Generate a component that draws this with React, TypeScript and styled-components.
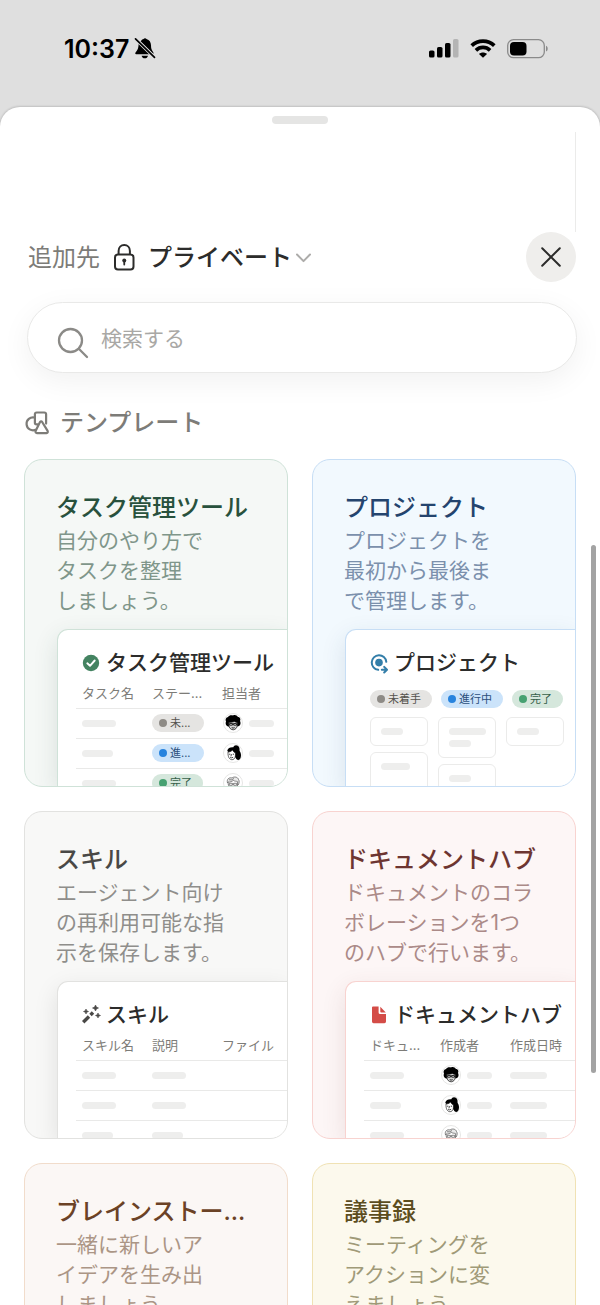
import React from "react";
import styled, { createGlobalStyle } from "styled-components";

const Global = createGlobalStyle`
  *, *::before, *::after { box-sizing: border-box; }
  html, body, #root { height: 100%; }
  body {
    margin: 0;
    overflow: hidden;
    background: #dfdfdf;
    color: #2c2c2b;
    font-family: Inter, "Noto Sans CJK JP", sans-serif;
  }
  button, input { font: inherit; color: inherit; border: 0; background: none; padding: 0; margin: 0; }
  h1, h2, h3, p { margin: 0; font: inherit; }
`;

const Screen = styled.div`
  height: 100vh;
  display: flex;
  flex-direction: column;
`;

const StatusBar = styled.header`
  flex: none;
  height: 107px;
  padding: 0 52px 10px 64px;
  display: flex;
  align-items: center;
  justify-content: space-between;
  color: #000;
`;

const StatusGroup = styled.div<{ $gap: number }>`
  display: flex;
  align-items: center;
  gap: ${(p) => p.$gap}px;
`;

const Clock = styled.time`
  font-size: 25px;
  line-height: 30px;
  font-weight: 600;
`;

const Sheet = styled.main`
  position: relative;
  flex: 1;
  min-height: 0;
  display: flex;
  flex-direction: column;
  background: #fff;
  border-radius: 20px 20px 0 0;
  box-shadow: 0 0 2px 1px rgba(0, 0, 0, 0.14);
  overflow: hidden;
`;

const Grabber = styled.div`
  flex: none;
  width: 56px;
  height: 8px;
  margin: 9px auto 8px;
  border-radius: 4px;
  background: #e5e5e4;
`;

const Pane = styled.div`
  flex: none;
  height: 100px;
  margin-right: 24px;
  border-right: 1px solid #ebebea;
`;

const Header = styled.div`
  flex: none;
  display: flex;
  align-items: center;
  justify-content: space-between;
  height: 50px;
  padding: 0 24px 0 28px;
  font-size: 24px;
  line-height: 36px;
`;

const Destination = styled.div`
  display: flex;
  align-items: center;
  padding-top: 2px;
  color: #7d7c78;
`;

const Picker = styled.button`
  display: flex;
  align-items: center;
  margin-left: 13px;
  color: #2c2c2b;
  font-weight: 500;

  span { margin: 0 3px 0 12px; }
`;

const CloseButton = styled.button`
  display: grid;
  place-items: center;
  width: 50px;
  height: 50px;
  border-radius: 50%;
  background: #efeeec;
`;

const SearchBox = styled.label`
  flex: none;
  display: flex;
  align-items: center;
  gap: 12px;
  height: 71px;
  margin: 20px 23px 0 27px;
  padding: 2px 28px 0 29px;
  border: 1px solid #e9e9e8;
  border-radius: 36px;
  background: #fff;
  box-shadow: 0 8px 30px rgba(0, 0, 0, 0.06);

  svg { margin-top: 8px; }
`;

const SearchInput = styled.input`
  flex: 1;
  min-width: 0;
  height: 32px;
  outline: none;
  font-size: 21px;
  &::placeholder { color: #a9a8a5; opacity: 1; }
`;

const SectionTitle = styled.h2`
  flex: none;
  display: flex;
  align-items: center;
  gap: 10px;
  margin: 32px 24px 0;
  font-size: 24px;
  line-height: 36px;
  font-weight: 500;
  color: #7d7c78;
`;

const Grid = styled.div`
  flex: none;
  display: grid;
  grid-template-columns: repeat(2, minmax(0, 1fr));
  grid-auto-rows: 328px;
  gap: 24px;
  padding: 18px 24px 24px;
`;

const ScrollThumb = styled.div`
  position: absolute;
  top: 438px;
  right: 4px;
  width: 5px;
  height: 528px;
  border-radius: 3px;
  background: #a3a3a3;
`;

type Tone = { bg: string; border: string; title: string; text: string; shade: string };

const CardBox = styled.button<{ $tone: Tone }>`
  display: flex;
  flex-direction: column;
  justify-content: flex-start;
  align-items: stretch;
  min-width: 0;
  padding: 32px 0 0 31px;
  overflow: hidden;
  text-align: left;
  border: 1px solid ${(p) => p.$tone.border};
  border-radius: 18px;
  background: ${(p) => p.$tone.bg};
`;

const CardTitle = styled.h3<{ $tone: Tone }>`
  margin-right: 31px;
  white-space: nowrap;
  font-size: 24px;
  line-height: 32px;
  font-weight: 500;
  color: ${(p) => p.$tone.title};
`;

const CardText = styled.p<{ $tone: Tone }>`
  margin-top: 2px;
  font-size: 21px;
  line-height: 30px;
  white-space: pre;
  color: ${(p) => p.$tone.text};
`;

const Preview = styled.div<{ $tone: Tone }>`
  flex: 1;
  min-height: 0;
  margin: 13px 0 0 1px;
  padding: 17px 0 0 18px;
  overflow: hidden;
  background: #fff;
  border: solid ${(p) => p.$tone.border};
  border-width: 1px 0 0 1px;
  border-top-left-radius: 11px;
  box-shadow: 0 8px 24px ${(p) => p.$tone.shade};
`;

const PreviewTitle = styled.div`
  display: flex;
  align-items: center;
  gap: 6px;
  padding-left: 6px;
  font-size: 21px;
  line-height: 32px;
  font-weight: 500;
  white-space: nowrap;
  color: #2c2c2b;
`;

const Table = styled.table`
  width: 216px;
  table-layout: fixed;
  border-collapse: collapse;

  th, td { padding: 0 0 0 6px; white-space: nowrap; }
  th { height: 29px; font-size: 13px; line-height: 18px; font-weight: 400; text-align: left; color: #7d7c78; }
  td { height: 30px; border-top: 1px solid #e9e9e8; }
  th:not(:last-child) { width: 70px; }
`;

const Cell = styled.div`
  display: flex;
  align-items: center;
  gap: 6px;
  padding-left: 1px;
`;

const Bar = styled.i<{ $w: number }>`
  display: block;
  width: ${(p) => p.$w}px;
  height: 7px;
  border-radius: 4px;
  background: #eeeeed;
`;

type PillKind = "todo" | "doing" | "done";
const pillColors: Record<PillKind, { bg: string; dot: string; text: string }> = {
  todo: { bg: "#e5e4e2", dot: "#8e8b86", text: "#55534e" },
  doing: { bg: "#cbe3fa", dot: "#2783de", text: "#2a4f7c" },
  done: { bg: "#d5e7dc", dot: "#46a171", text: "#36604a" },
};

const Pill = styled.span<{ $kind: PillKind; $w: number }>`
  display: flex;
  align-items: center;
  gap: 3px;
  width: ${(p) => p.$w}px;
  height: 18px;
  padding-left: 7px;
  border-radius: 9px;
  font-size: 11px;
  line-height: 18px;
  white-space: nowrap;
  background: ${(p) => pillColors[p.$kind].bg};
  color: ${(p) => pillColors[p.$kind].text};

  &::before {
    content: "";
    flex: none;
    width: 8px;
    height: 8px;
    border-radius: 50%;
    background: ${(p) => pillColors[p.$kind].dot};
  }
`;

const PillRow = styled.div`
  display: flex;
  gap: 9px;
  padding: 11px 0 9px 6px;
`;

const Board = styled.div`
  display: flex;
  align-items: flex-start;
  gap: 10px;
  padding-left: 6px;
`;

const Column = styled.div`
  display: flex;
  flex-direction: column;
  gap: 6px;
  width: 58px;
`;

const MiniCard = styled.div<{ $tall?: boolean }>`
  display: flex;
  flex-direction: column;
  gap: 5px;
  min-height: ${(p) => (p.$tall ? 48 : 28)}px;
  padding: 10px;
  border: 1px solid #ebebea;
  border-radius: 6px;
`;

const BellOff = () => (
  <svg width="22" height="23" viewBox="0 0 22 23" aria-label="消音">
    <path d="M6.3 4.6C7.4 3 8.6 2.200 9.600 1.900C10 .9 12 .9 12.500 1.900C15.500 2.700 16.900 5.200 17 8.200C17 11 17.500 12.500 18.600 14.200L19.400 15.600V17.200Z" fill="#000" />
    <path d="M4.700 6.600L16.200 17.200H2.200C1 17.200 1 15.800 1.900 14.900C3.600 13.200 4.300 12 4.700 6.600Z" fill="#000" />
    <path d="M7.600 18.700H14C13.600 20.400 12.400 21.300 10.800 21.300C9.200 21.300 8 20.400 7.600 18.700Z" fill="#000" />
    <path d="M1.500 1.800L20.500 20.300" stroke="#dfdfdf" strokeWidth="3.400" />
    <path d="M1.500 1.800L20.500 20.300" stroke="#000" strokeWidth="1.700" strokeLinecap="round" />
  </svg>
);

const Signal = () => (
  <svg width="30" height="19" viewBox="0 0 30 19" aria-label="電波">
    <rect x="0" y="11.500" width="5.500" height="7" rx="1.600" />
    <rect x="8" y="8" width="5.500" height="10.500" rx="1.600" />
    <rect x="16" y="4" width="5.500" height="14.500" rx="1.600" />
    <rect x="24" y="0" width="5.500" height="18.500" rx="1.600" fill="#b4b4b4" />
  </svg>
);

const Wifi = () => (
  <svg width="26" height="19" viewBox="0 0 26 19" aria-label="Wi-Fi">
    <g fill="none" stroke="#000" strokeWidth="3.700">
      <path d="M1.700 6.700C8 .6 18 .6 24.300 6.700" />
      <path d="M5.900 11.300C10 7.500 16 7.500 20.100 11.300" />
    </g>
    <path d="M13 18.800L9 14.900C11.200 12.900 14.800 12.900 17 14.900Z" />
  </svg>
);

const Battery = () => (
  <svg width="41" height="20" viewBox="0 0 41 20" aria-label="バッテリー">
    <rect x=".7" y=".7" width="36.600" height="18" rx="5.800" fill="none" stroke="#8a8a8a" strokeWidth="1.300" />
    <rect x="3" y="3" width="16.500" height="13.400" rx="4" />
    <path d="M39 6.800C41.300 8 41.300 11.400 39 12.600Z" fill="#8a8a8a" />
  </svg>
);

const Lock = () => (
  <svg width="23" height="28" viewBox="0 0 23 28" fill="none" stroke="currentColor" strokeWidth="2">
    <rect x="2" y="10.500" width="18.500" height="15" rx="3" />
    <path d="M5.600 10.500V7C5.600 3.500 8 1.100 11.250 1.100S16.900 3.500 16.900 7V10.500" />
    <circle cx="11.250" cy="16.500" r="2" fill="currentColor" stroke="none" />
    <path d="M11.250 16.500V20.500" strokeWidth="1.800" strokeLinecap="round" />
  </svg>
);

const Chevron = () => (
  <svg width="17" height="11" viewBox="0 0 17 11" fill="none" stroke="#adacaa" strokeWidth="2" strokeLinecap="round" strokeLinejoin="round">
    <path d="M2 1.500L8.500 8.100L15 1.500" />
  </svg>
);

const Cross = () => (
  <svg width="22" height="22" viewBox="0 0 22 22" fill="none" stroke="#2c2c2b" strokeWidth="2" strokeLinecap="round">
    <path d="M2.200 2.200L19.800 19.800M19.800 2.200L2.200 19.800" />
  </svg>
);

const Magnifier = () => (
  <svg width="32" height="32" viewBox="0 0 32 32" fill="none" stroke="#8b8a87" strokeWidth="2.300" strokeLinecap="round">
    <circle cx="13.500" cy="13.500" r="11.500" />
    <path d="M21.800 21.800L30 30" />
  </svg>
);

const Shapes = () => (
  <svg width="26" height="26" viewBox="0 0 26 26" fill="none" stroke="currentColor" strokeWidth="2.200" strokeLinejoin="round" strokeLinecap="round">
    <path d="M10.600 7.500A6.500 6.500 0 1 0 11.600 19.800" />
    <path d="M13.600 14.400H12.600Q10.900 14.300 10.900 12.700V4.300Q10.900 2.500 12.700 2.500H20.300Q22.100 2.500 22.100 4.300V13.600" />
    <path d="M15.900 12.200Q17.100 10.600 18.300 12.200L23.600 20.900Q24.300 22.900 22.400 23.200H13.100Q11 22.900 11.600 20.900Z" />
  </svg>
);

const CheckIcon = () => (
  <svg width="18" height="18" viewBox="0 0 18 18">
    <circle cx="9" cy="9" r="8.200" fill="#448361" />
    <path d="M5.300 9.300L8 11.800L12.700 6.500" fill="none" stroke="#fff" strokeWidth="1.900" strokeLinecap="round" strokeLinejoin="round" />
  </svg>
);

const TargetIcon = () => (
  <svg width="18" height="22" viewBox="0 0 18 22" fill="none" stroke="#337ea9" strokeWidth="2" strokeLinecap="round" strokeLinejoin="round">
    <path d="M8.200 17.800A7.300 7.300 0 1 1 16.300 9.800" />
    <circle cx="9" cy="10.600" r="3.800" fill="#337ea9" stroke="none" />
    <path d="M11.800 17.700H16.600M14.200 14.900L17 17.700L14.200 20.500" />
  </svg>
);

const WandIcon = () => (
  <svg width="18" height="20" viewBox="1 0 18 20" fill="#494846" overflow="visible">
    <path d="M2.200 17.300L8 11.500" stroke="#494846" strokeWidth="3.400" />
    <path d="M9.500 10L12 7.500" stroke="#494846" strokeWidth="3.400" />
    <path d="M14.500 0Q14.900 2.600 17.500 3Q14.900 3.400 14.500 6Q14.100 3.400 11.500 3Q14.100 2.600 14.500 0Z" stroke="#494846" strokeWidth=".6" />
    <path d="M5 4Q5.300 6.200 7.500 6.500Q5.300 6.800 5 9Q4.700 6.800 2.500 6.500Q4.700 6.200 5 4Z" stroke="#494846" strokeWidth=".6" />
    <path d="M17 8Q17.300 10.200 19.500 10.500Q17.300 10.800 17 13Q16.700 10.800 14.500 10.500Q16.700 10.200 17 8Z" stroke="#494846" strokeWidth=".6" />
  </svg>
);

const DocIcon = () => (
  <svg width="18" height="18" viewBox="0 0 18 18" fill="#d44c47">
    <path d="M3 .6H8.600V6.500Q8.600 8 10.100 8H16V15.600Q16 17.200 14.400 17.200H3.600Q2 17.200 2 15.600V1.600Q2 .6 3 .6Z" />
    <path d="M10.300 .8L15.800 6.400H11.200Q10.300 6.400 10.300 5.500Z" />
  </svg>
);

const Face = ({ who }: { who: number }) => (
  <svg width="20" height="20" viewBox="0 0 20 20">
    <circle cx="10" cy="10" r="9.500" fill="#fff" stroke="#e6e6e5" />
    {who === 0 && (
      <>
        <path d="M3 8.500C1.900 6 3.500 4.200 5 4C6 1.800 8.800 2 10 2.400C12 1.300 14 2.400 14.700 3.700C17 4 18 6.200 17 8C18.200 10 17.400 13 15.300 13.200L5 13.500C3 13 2 10.500 3 8.500Z" />
        <path d="M5.800 9.300C8 9.500 10 8.800 11.500 8.400C12.500 9.100 13.500 9.300 14.400 9.400L14.300 12.700C13.900 15 12.200 16.800 10.300 16.800C8 16.800 6 15 5.800 12.300Z" fill="#d4d4d4" stroke="#000" strokeWidth=".7" />
        <path d="M6.600 10.500H9.400V12.200H6.600ZM10.700 10.500H13.500V12.200H10.700ZM9.400 11H10.700M8.700 14.700Q10.200 15.400 11.700 14.700" fill="none" stroke="#000" strokeWidth=".8" />
      </>
    )}
    {who === 1 && (
      <>
        <path d="M4.200 8C4.800 4.800 7.600 4 10.300 4.300C10.800 2 13.500 1.500 15.200 3C17 4.700 16.400 6.400 16.600 8C18.700 10.500 18.300 15 16.500 16.600C15 17.600 13 16.500 12.600 14.500Z" />
        <path d="M5 9C7 9 8.500 8.200 9.500 7C10.500 8.600 11 9.500 12.400 9.700V13C12 15.600 10.500 16.900 8.800 16.700C6.300 16.400 4.800 14 5 9Z" fill="#fff" stroke="#000" strokeWidth=".6" />
        <path d="M6.800 11V11.600M10.300 11V11.600M8.400 11.500L8 13M7.500 14.700Q8.700 15.300 9.800 14.500" fill="none" stroke="#000" strokeWidth=".7" strokeLinecap="round" />
      </>
    )}
    {who === 2 && (
      <g fill="none" stroke="#555" strokeWidth=".7">
        <path d="M4.500 10C3.500 6 6 4.200 9 5C11 3.200 15 4 15.500 6.500C16.800 8 16 10.500 15.200 12" fill="#e9e9e9" />
        <path d="M5 9C7.500 9.500 9 8 10.500 7.500C12 8.500 13.500 8 14.600 8.700L14.500 13C13.500 16 11.500 17 10 17C7.500 17 5.300 14.500 5 9Z" fill="#fff" />
        <path d="M6.300 10.300H9.300V12.300H6.300ZM10.700 10.300H13.700V12.300H10.700ZM9.300 11H10.700M6 6.800Q9 7.400 11 5.500" />
      </g>
    )}
  </svg>
);

const Person = ({ who }: { who: number }) => (
  <Cell>
    <Face who={who} />
    <Bar $w={25} />
  </Cell>
);

const DataTable = ({ heads, rows }: { heads: string[]; rows: React.ReactNode[][] }) => (
  <Table>
    <thead>
      <tr>{heads.map((h) => <th key={h} scope="col">{h}</th>)}</tr>
    </thead>
    <tbody>
      {rows.map((row, i) => (
        <tr key={i}>{row.map((c, j) => <td key={j}>{c}</td>)}</tr>
      ))}
    </tbody>
  </Table>
);

const tones: Record<string, Tone> = {
  green: { bg: "#f5f8f6", border: "#cfe2d8", title: "#28513d", text: "#7f968a", shade: "rgba(40, 81, 61, 0.14)" },
  blue: { bg: "#f2f9fe", border: "#c7def5", title: "#24446e", text: "#7b90ac", shade: "rgba(36, 68, 110, 0.13)" },
  gray: { bg: "#f8f8f7", border: "#e2e2e0", title: "#494846", text: "#8f8e8b", shade: "rgba(0, 0, 0, 0.1)" },
  red: { bg: "#fdf6f6", border: "#f8d3d0", title: "#6d3531", text: "#ab8a88", shade: "rgba(109, 53, 49, 0.12)" },
  orange: { bg: "#fbf7f5", border: "#f1dccb", title: "#6b4226", text: "#ab9585", shade: "rgba(107, 66, 38, 0.13)" },
  yellow: { bg: "#fcf9ed", border: "#f0e2b4", title: "#5c4d1e", text: "#a09a78", shade: "rgba(92, 77, 30, 0.13)" },
};

const bar = (w: number) => <Bar $w={w} />;

type Template = {
  title: string;
  text: string;
  tone: Tone;
  icon: React.ReactNode;
  body: React.ReactNode;
};

const templates: Template[] = [
  {
    title: "タスク管理ツール",
    text: "自分のやり方で\nタスクを整理\nしましょう。",
    tone: tones.green,
    icon: <CheckIcon />,
    body: (
      <DataTable
        heads={["タスク名", "ステー...", "担当者"]}
        rows={[
          [bar(34), <Pill $kind="todo" $w={52}>未...</Pill>, <Person who={0} />],
          [bar(31), <Pill $kind="doing" $w={52}>進...</Pill>, <Person who={1} />],
          [bar(34), <Pill $kind="done" $w={51}>完了</Pill>, <Person who={2} />],
        ]}
      />
    ),
  },
  {
    title: "プロジェクト",
    text: "プロジェクトを\n最初から最後ま\nで管理します。",
    tone: tones.blue,
    icon: <TargetIcon />,
    body: (
      <>
        <PillRow>
          <Pill $kind="todo" $w={62}>未着手</Pill>
          <Pill $kind="doing" $w={62}>進行中</Pill>
          <Pill $kind="done" $w={51}>完了</Pill>
        </PillRow>
        <Board>
          <Column>
            <MiniCard>{bar(22)}</MiniCard>
            <MiniCard $tall>{bar(29)}</MiniCard>
          </Column>
          <Column>
            <MiniCard>{bar(37)}{bar(22)}</MiniCard>
            <MiniCard $tall>{bar(22)}</MiniCard>
          </Column>
          <Column>
            <MiniCard>{bar(22)}</MiniCard>
          </Column>
        </Board>
      </>
    ),
  },
  {
    title: "スキル",
    text: "エージェント向け\nの再利用可能な指\n示を保存します。",
    tone: tones.gray,
    icon: <WandIcon />,
    body: (
      <DataTable
        heads={["スキル名", "説明", "ファイル"]}
        rows={[
          [bar(34), bar(34), null],
          [bar(34), bar(34), null],
          [bar(31), bar(31), null],
        ]}
      />
    ),
  },
  {
    title: "ドキュメントハブ",
    text: "ドキュメントのコラ\nボレーションを1つ\nのハブで行います。",
    tone: tones.red,
    icon: <DocIcon />,
    body: (
      <DataTable
        heads={["ドキュ...", "作成者", "作成日時"]}
        rows={[
          [bar(34), <Person who={0} />, bar(37)],
          [bar(31), <Person who={1} />, bar(37)],
          [bar(34), <Person who={2} />, bar(37)],
        ]}
      />
    ),
  },
  {
    title: "ブレインストー...",
    text: "一緒に新しいア\nイデアを生み出\nしましょう。",
    tone: tones.orange,
    icon: null,
    body: null,
  },
  {
    title: "議事録",
    text: "ミーティングを\nアクションに変\nえましょう。",
    tone: tones.yellow,
    icon: null,
    body: null,
  },
];

const TemplateCard = ({ title, text, tone, icon, body }: Template) => (
  <CardBox type="button" $tone={tone}>
    <CardTitle $tone={tone}>{title}</CardTitle>
    <CardText $tone={tone}>{text}</CardText>
    <Preview $tone={tone}>
      {body && (
        <>
          <PreviewTitle>{icon}{title}</PreviewTitle>
          {body}
        </>
      )}
    </Preview>
  </CardBox>
);

export default function App() {
  return (
    <>
      <Global />
      <Screen>
        <StatusBar>
          <StatusGroup $gap={5}>
            <Clock>10:37</Clock>
            <BellOff />
          </StatusGroup>
          <StatusGroup $gap={11}>
            <Signal />
            <Wifi />
            <Battery />
          </StatusGroup>
        </StatusBar>
        <Sheet>
          <Grabber />
          <Pane />
          <Header>
            <Destination>
              追加先
              <Picker type="button">
                <Lock />
                <span>プライベート</span>
                <Chevron />
              </Picker>
            </Destination>
            <CloseButton type="button" aria-label="閉じる">
              <Cross />
            </CloseButton>
          </Header>
          <SearchBox>
            <Magnifier />
            <SearchInput type="search" placeholder="検索する" aria-label="検索する" />
          </SearchBox>
          <SectionTitle>
            <Shapes />
            テンプレート
          </SectionTitle>
          <Grid>
            {templates.map((t) => <TemplateCard key={t.title} {...t} />)}
          </Grid>
          <ScrollThumb />
        </Sheet>
      </Screen>
    </>
  );
}
